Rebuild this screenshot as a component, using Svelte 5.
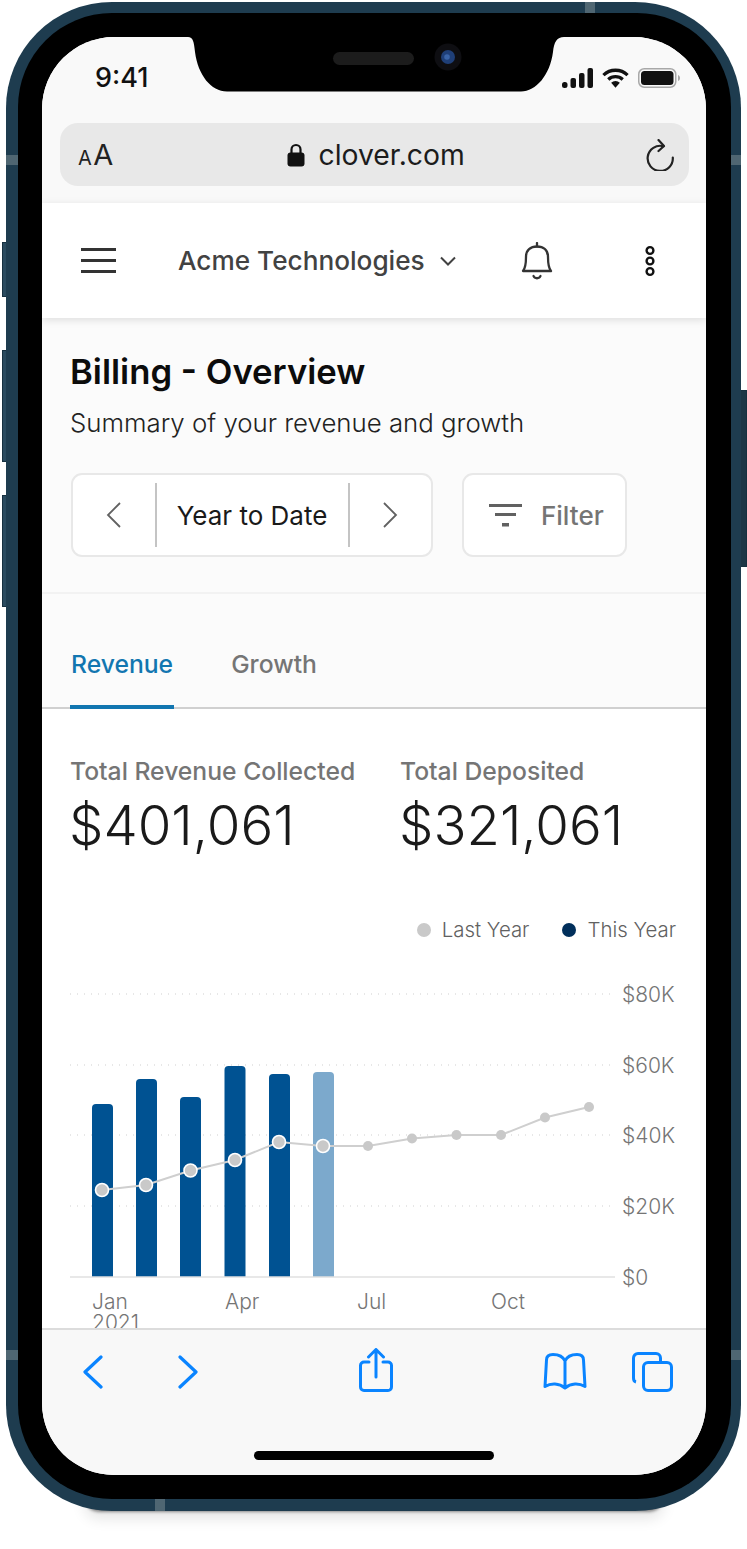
<script>
  const gridLines = [
    { y: 994, label: '$80K' },
    { y: 1065, label: '$60K' },
    { y: 1135, label: '$40K' },
    { y: 1206, label: '$20K' }
  ];
  const chartTop = 900;
  const baseline = 1277 - chartTop;
  const bars = [
    { x: 92, top: 1104 },
    { x: 136, top: 1079 },
    { x: 180, top: 1097 },
    { x: 224.5, top: 1066 },
    { x: 269, top: 1074 },
    { x: 313, top: 1072, partial: true }
  ];
  const lastYear = [
    [102, 1190], [146, 1185], [190.5, 1170.5], [235, 1160], [279, 1142], [323, 1146],
    [368, 1146], [412, 1138.5], [456.5, 1135], [501, 1135], [545, 1117.5], [589, 1107]
  ];
  const linePoints = lastYear.map(p => `${p[0]},${p[1] - chartTop}`).join(' ');
  const months = [
    { x: 92, label: 'Jan' },
    { x: 225, label: 'Apr' },
    { x: 357, label: 'Jul' },
    { x: 491, label: 'Oct' }
  ];
  const bands = ['top', 'left-a', 'right-a', 'left-b', 'right-b', 'bottom'];
</script>

<div class="stage">
  <div class="shadow"></div>
  <span class="side-btn b1"></span>
  <span class="side-btn b2"></span>
  <span class="side-btn b3"></span>
  <span class="side-btn b4"></span>
  <div class="phone">
    {#each bands as b}
      <span class="band {b}"></span>
    {/each}
    <div class="bezel">
      <div class="screen">
        <div class="browser-top">
          <div class="status">
            <span class="time">9:41</span>
            <div class="status-icons">
              <svg width="31" height="20" viewBox="0 0 31 20" fill="#111">
                <rect x="0" y="14" width="5.5" height="6" rx="2.5" />
                <rect x="8.5" y="10" width="5.5" height="10" rx="2" />
                <rect x="17" y="5" width="5.5" height="15" rx="2" />
                <rect x="25.5" y="0" width="5.5" height="20" rx="2" />
              </svg>
              <svg width="27" height="20" viewBox="0 0 28 20" fill="none" stroke="#111" stroke-width="3.4">
                <path d="M1.5 7 A18 18 0 0 1 26.5 7" />
                <path d="M6.5 11.5 A11 11 0 0 1 21.5 11.5" />
                <path d="M14 20 L9.5 15 A6.5 6.5 0 0 1 18.5 15 Z" fill="#111" stroke="none" />
              </svg>
              <svg width="43" height="20" viewBox="0 0 43 20">
                <rect x="0.75" y="0.75" width="37" height="18.5" rx="5.5" fill="none" stroke="#a8a8a8" stroke-width="1.5" />
                <rect x="3" y="3" width="32.5" height="14" rx="3.5" fill="#111" />
                <path d="M40 7 c1.3 .5 2 1.5 2 3 s-.7 2.5 -2 3 Z" fill="#a8a8a8" />
              </svg>
            </div>
          </div>
          <div class="address">
            <span class="aa"><small>A</small>A</span>
            <div class="url">
              <svg width="18" height="24" viewBox="0 0 18 24">
                <path d="M4.5 11 V6.5 a4.5 4.5 0 0 1 9 0 V11" fill="none" stroke="#111" stroke-width="2.2" />
                <rect x="0.5" y="9.5" width="17" height="14" rx="3" fill="#111" />
              </svg>
              <span>clover.com</span>
            </div>
            <svg class="reload" width="28" height="32" viewBox="0 0 28 32" fill="none" stroke="#222" stroke-width="2.2" stroke-linecap="round" stroke-linejoin="round">
              <path d="M17.5 7.2 A12.6 12.6 0 1 0 26.8 18.5" />
              <path d="M12.5 1 L18 7 L12.5 12" />
            </svg>
          </div>
        </div>

        <header class="topbar">
          <div class="burger"><i></i><i></i><i></i></div>
          <div class="account">
            <span>Acme Technologies</span>
            <svg width="16" height="10" viewBox="0 0 16 10" fill="none" stroke="#424242" stroke-width="2"><path d="M1 1.5 L8 8.5 L15 1.5" /></svg>
          </div>
          <svg class="bell" width="32" height="38" viewBox="0 0 32 38" fill="none" stroke="#333" stroke-width="2.3" stroke-linecap="round" stroke-linejoin="round">
            <path d="M16 1 V4.5" />
            <path d="M2 29 C4.5 26 5 21 5 15 C5 8 9.5 4.5 16 4.5 C22.5 4.5 27 8 27 15 C27 21 27.5 26 30 29 Z" />
            <path d="M12.5 34 C13.5 37 18.5 37 19.5 34" />
          </svg>
          <svg class="more" width="12" height="32" viewBox="0 0 12 32" fill="none" stroke="#111" stroke-width="2.4">
            <circle cx="6" cy="5.5" r="3.4" />
            <circle cx="6" cy="16" r="3.4" />
            <circle cx="6" cy="26.5" r="3.4" />
          </svg>
        </header>

        <section class="billing">
          <h1>Billing - Overview</h1>
          <p>Summary of your revenue and growth</p>
          <div class="controls">
            <div class="range">
              <span class="step">
                <svg width="16" height="26" viewBox="0 0 16 26" fill="none" stroke="#616161" stroke-width="1.8"><path d="M14 1 L2 13 L14 25" /></svg>
              </span>
              <span class="range-label">Year to Date</span>
              <span class="step">
                <svg width="16" height="26" viewBox="0 0 16 26" fill="none" stroke="#616161" stroke-width="1.8"><path d="M2 1 L14 13 L2 25" /></svg>
              </span>
            </div>
            <div class="filter">
              <svg width="33" height="23" viewBox="0 0 33 23" fill="#616161">
                <rect x="0" y="0" width="33" height="3" />
                <rect x="6" y="9" width="21" height="3" />
                <rect x="13" y="19" width="7" height="3.5" />
              </svg>
              <span>Filter</span>
            </div>
          </div>
        </section>

        <nav class="tabs">
          <span class="tab active">Revenue</span>
          <span class="tab">Growth</span>
        </nav>

        <main class="content">
          <div class="stats">
            <div class="stat first">
              <span>Total Revenue Collected</span>
              <strong>$401,061</strong>
            </div>
            <div class="stat">
              <span>Total Deposited</span>
              <strong>$321,061</strong>
            </div>
          </div>
          <div class="legend">
            <span><i class="dot last"></i>Last Year</span>
            <span><i class="dot this"></i>This Year</span>
          </div>
          <svg class="chart" width="664" height="440" viewBox="42 0 664 440">
            {#each gridLines as g}
              <line x1="70" x2="615" y1={g.y - chartTop} y2={g.y - chartTop} class="grid" />
              <text x="622" y={g.y - chartTop + 8} class="axis">{g.label}</text>
            {/each}
            {#each bars as b}
              <path
                d="M{b.x} {baseline} V{b.top - chartTop + 4} q0 -4 4 -4 h13 q4 0 4 4 V{baseline} Z"
                fill={b.partial ? '#7ca9cc' : '#005292'} />
            {/each}
            <line x1="70" x2="615" y1={baseline} y2={baseline} stroke="#e0e0e0" stroke-width="1.5" />
            <text x="622" y={baseline + 8} class="axis">$0</text>
            <polyline points={linePoints} fill="none" stroke="#cfcfcf" stroke-width="2" />
            {#each lastYear as p, i}
              {#if i < 6}
                <circle cx={p[0]} cy={p[1] - chartTop} r="6.5" fill="#c9c9c9" stroke="#fff" stroke-width="1.6" />
              {:else}
                <circle cx={p[0]} cy={p[1] - chartTop} r="5" fill="#c9c9c9" />
              {/if}
            {/each}
            {#each months as m}
              <text x={m.x} y={baseline + 32} class="axis">{m.label}</text>
            {/each}
            <text x="92" y={baseline + 53} class="axis">2021</text>
          </svg>
        </main>

        <footer class="toolbar">
          <div class="tools">
            <svg class="t-back" width="20" height="34" viewBox="0 0 20 34" fill="none" stroke="#0a84ff" stroke-width="3.2" stroke-linecap="round" stroke-linejoin="round"><path d="M18 2 L2 17 L18 32" /></svg>
            <svg class="t-fwd" width="20" height="34" viewBox="0 0 20 34" fill="none" stroke="#0a84ff" stroke-width="3.2" stroke-linecap="round" stroke-linejoin="round"><path d="M2 2 L18 17 L2 32" /></svg>
            <svg class="t-share" width="34" height="44" viewBox="0 0 34 44" fill="none" stroke="#0a84ff" stroke-width="3" stroke-linecap="round" stroke-linejoin="round">
              <path d="M17 29 V2 M9.5 9 L17 1.5 L24.5 9" />
              <path d="M10 14 H5 a3.5 3.5 0 0 0 -3.5 3.5 V39 a3.5 3.5 0 0 0 3.5 3.5 H29 a3.5 3.5 0 0 0 3.5 -3.5 V17.5 a3.5 3.5 0 0 0 -3.5 -3.5 H24" />
            </svg>
            <svg class="t-book" width="44" height="37" viewBox="0 0 44 37" fill="none" stroke="#0a84ff" stroke-width="3" stroke-linecap="round" stroke-linejoin="round">
              <path d="M22 8 C20 3.5 15 1.5 10 1.5 C6 1.5 3.5 3 3.5 7 L2 33.5 C8 30 16 30 22 35 C28 30 36 30 42 33.5 L40.5 7 C40.5 3 38 1.5 34 1.5 C29 1.5 24 3.5 22 8 V34" />
            </svg>
            <svg class="t-tabs" width="41" height="40" viewBox="0 0 41 40" fill="none" stroke="#0a84ff" stroke-width="3" stroke-linejoin="round">
              <path d="M4 30 C2 29.5 1.5 27 1.5 26 V6 A4.5 4.5 0 0 1 6 1.5 H24 A4.5 4.5 0 0 1 28.5 6 V9.5" />
              <rect x="11.5" y="10.5" width="28" height="28" rx="4.5" />
            </svg>
          </div>
          <div class="home-bar"></div>
        </footer>

        <svg class="notch" width="384" height="56" viewBox="0 0 384 56">
          <path d="M4 0 H380 C373 0 370 5 369 15 C366 38 352 54.5 337 54.5 H43 C27 54.5 14 38 11 15 C10 5 9 0 4 0 Z" fill="#000" />
          <rect x="149" y="15" width="81" height="13" rx="6.5" fill="#1c1c1c" />
          <circle cx="264" cy="20" r="13.5" fill="#0e0e12" />
          <circle cx="264" cy="20" r="7" fill="#1f3f78" />
          <circle cx="263" cy="20" r="2.8" fill="#3a64a8" />
        </svg>
      </div>
    </div>
  </div>
</div>

<style>
  :global(body) {
    margin: 0;
    background: #fff;
  }
  .stage {
    position: relative;
    width: 747px;
    height: 1549px;
    padding: 2px 0 0 6px;
    box-sizing: border-box;
    font-family: Inter, "Liberation Sans", sans-serif;
    overflow: hidden;
  }
  .shadow {
    position: absolute;
    left: 84px;
    top: 1480px;
    width: 580px;
    height: 30px;
    background: #555;
    border-radius: 40px;
    box-shadow: 0 2px 3px rgba(0, 0, 0, 0.4), 0 9px 14px rgba(0, 0, 0, 0.1);
  }
  .side-btn {
    position: absolute;
    background: #2a4a5e;
    border: 1px solid #16303f;
    box-sizing: border-box;
  }
  .b1 { left: 2px; top: 242px; width: 5px; height: 55px; }
  .b2 { left: 2px; top: 350px; width: 5px; height: 112px; }
  .b3 { left: 2px; top: 495px; width: 5px; height: 112px; }
  .b4 { left: 740px; top: 390px; width: 7px; height: 177px; background: #1c3646; }
  .phone {
    position: relative;
    width: 735px;
    height: 1509px;
    padding: 11px 10px 12px 12px;
    box-sizing: border-box;
    background: #1e3c4f;
    border-radius: 106px;
  }
  .band {
    position: absolute;
    background: #4f6672;
  }
  .band.top { left: 579px; top: 0; width: 10px; height: 11px; }
  .band.left-a { left: 0; top: 153px; width: 12px; height: 10px; }
  .band.right-a { right: 0; top: 153px; width: 10px; height: 10px; }
  .band.left-b { left: 0; top: 1348px; width: 12px; height: 10px; }
  .band.right-b { right: 0; top: 1348px; width: 10px; height: 10px; }
  .band.bottom { left: 149px; bottom: 0; width: 10px; height: 12px; }
  .bezel {
    height: 100%;
    padding: 24px 25px 24px 24px;
    box-sizing: border-box;
    background: #000;
    border-radius: 94px;
  }
  .screen {
    position: relative;
    display: flex;
    flex-direction: column;
    height: 100%;
    background: #fff;
    border-radius: 72px;
    overflow: hidden;
  }
  .notch {
    position: absolute;
    left: 142px;
    top: 0;
  }
  .browser-top {
    flex: none;
    height: 166px;
    padding: 0 17px 0 18px;
    box-sizing: border-box;
    background: #f9f9f9;
  }
  .status {
    display: flex;
    align-items: center;
    justify-content: space-between;
    height: 86px;
    padding: 0 8px 0 35px;
    box-sizing: border-box;
  }
  .time {
    margin-bottom: 5px;
    font-size: 27px;
    font-weight: 500;
    color: #111;
  }
  .status-icons {
    display: flex;
    align-items: center;
    gap: 9px;
    margin-bottom: 4px;
  }
  .address {
    display: flex;
    align-items: center;
    justify-content: space-between;
    height: 63px;
    padding: 0 15px 0 18px;
    box-sizing: border-box;
    background: #e8e8e8;
    border-radius: 18px;
  }
  .aa {
    font-size: 29px;
    color: #222;
    font-weight: 400;
  }
  .aa small {
    margin-right: 1.5px;
    font-size: 20px;
  }
  .url {
    display: flex;
    align-items: center;
    gap: 14px;
    margin-left: -8px;
    font-size: 28.3px;
    color: #1c1c1c;
  }
  .topbar {
    position: relative;
    z-index: 1;
    flex: none;
    display: flex;
    align-items: center;
    height: 115px;
    padding: 0 50px 0 39px;
    box-sizing: border-box;
    background: #fff;
    box-shadow: 0 2px 8px rgba(0, 0, 0, 0.12);
  }
  .burger {
    display: flex;
    flex-direction: column;
    gap: 8.5px;
    width: 35px;
  }
  .burger i {
    display: block;
    height: 2.5px;
    background: #333;
  }
  .account {
    display: flex;
    align-items: center;
    gap: 15px;
    margin-left: 62px;
    font-size: 26.2px;
    font-weight: 500;
    color: #424242;
  }
  .bell {
    margin-left: 65px;
  }
  .more {
    margin-left: auto;
  }
  .billing {
    flex: none;
    height: 276px;
    padding: 0 29px;
    box-sizing: border-box;
    background: #fbfbfb;
    border-bottom: 2px solid #f2f2f2;
  }
  h1 {
    margin: 0 0 0 -1px;
    padding-top: 31px;
    font-size: 34.7px;
    line-height: 44px;
    font-weight: 600;
    color: #0c0c0c;
  }
  .billing p {
    margin: 13px 0 0 -1px;
    font-size: 25.8px;
    line-height: 34px;
    font-weight: 300;
    color: #222;
  }
  .controls {
    display: flex;
    gap: 29px;
    margin-top: 33px;
  }
  .range,
  .filter {
    display: flex;
    align-items: center;
    height: 84px;
    box-sizing: border-box;
    background: #fff;
    border: 2px solid #e8e8e8;
    border-radius: 11px;
  }
  .range {
    width: 362px;
  }
  .step {
    flex: 1;
    display: flex;
    justify-content: center;
  }
  .range-label {
    flex: none;
    display: flex;
    align-items: center;
    justify-content: center;
    width: 195px;
    height: 64px;
    border-left: 2px solid #c4c4c4;
    border-right: 2px solid #c4c4c4;
    box-sizing: border-box;
    font-size: 26px;
    color: #1a1a1a;
  }
  .filter {
    width: 165px;
    gap: 19px;
    padding-left: 25px;
    font-size: 26px;
    font-weight: 500;
    color: #757575;
  }
  .tabs {
    flex: none;
    display: flex;
    gap: 56px;
    height: 115px;
    padding: 0 28px;
    box-sizing: border-box;
    background: #fbfbfb;
    border-bottom: 2px solid #d0d0d0;
  }
  .tab {
    display: flex;
    align-items: center;
    height: 115px;
    padding: 28px 1px 0;
    box-sizing: border-box;
    font-size: 24.7px;
    font-weight: 500;
    color: #757575;
    border-bottom: 4px solid transparent;
  }
  .tab.active {
    color: #1276b0;
    border-bottom-color: #1276b0;
  }
  .content {
    flex: 1;
    min-height: 0;
    position: relative;
    overflow: hidden;
    background: #fff;
  }
  .stats {
    display: flex;
    padding: 47px 0 0 28px;
  }
  .stat {
    display: flex;
    flex-direction: column;
  }
  .stat.first {
    width: 330px;
  }
  .stat span {
    font-size: 24.7px;
    line-height: 30px;
    font-weight: 500;
    color: #757575;
    white-space: nowrap;
  }
  .stat strong {
    margin: 8px 0 0 -1px;
    font-size: 54.5px;
    line-height: 62px;
    font-weight: 300;
    color: #1a1a1a;
  }
  .legend {
    display: flex;
    justify-content: flex-end;
    gap: 33px;
    margin-top: 61px;
    padding-right: 30px;
    font-size: 20.4px;
    font-weight: 300;
    color: #616161;
  }
  .legend span {
    display: flex;
    align-items: center;
    gap: 11px;
  }
  .dot {
    width: 14px;
    height: 14px;
    border-radius: 50%;
  }
  .dot.last { background: #c9c9c9; }
  .dot.this { background: #012f5b; }
  .chart {
    position: absolute;
    left: 0;
    top: 191px;
  }
  .grid {
    stroke: #d0d0d0;
    stroke-width: 1.2;
    stroke-dasharray: 1 6;
  }
  .axis {
    font-family: Inter, "Liberation Sans", sans-serif;
    font-size: 21px;
    font-weight: 300;
    fill: #757575;
  }
  .toolbar {
    position: relative;
    flex: none;
    height: 147px;
    box-sizing: border-box;
    background: #f8f8f8;
    border-top: 2px solid #dcdcdc;
  }
  .tools {
    display: flex;
    align-items: center;
    height: 84px;
    padding: 0 0 0 41px;
  }
  .t-fwd { margin-left: 75px; }
  .t-share { margin: -4px 0 0 161px; }
  .t-book { margin: -2px 0 0 150px; }
  .t-tabs { margin: -1px 0 0 45px; }
  .home-bar {
    width: 240px;
    height: 9px;
    margin: 37px auto 0;
    background: #000;
    border-radius: 5px;
  }
</style>
